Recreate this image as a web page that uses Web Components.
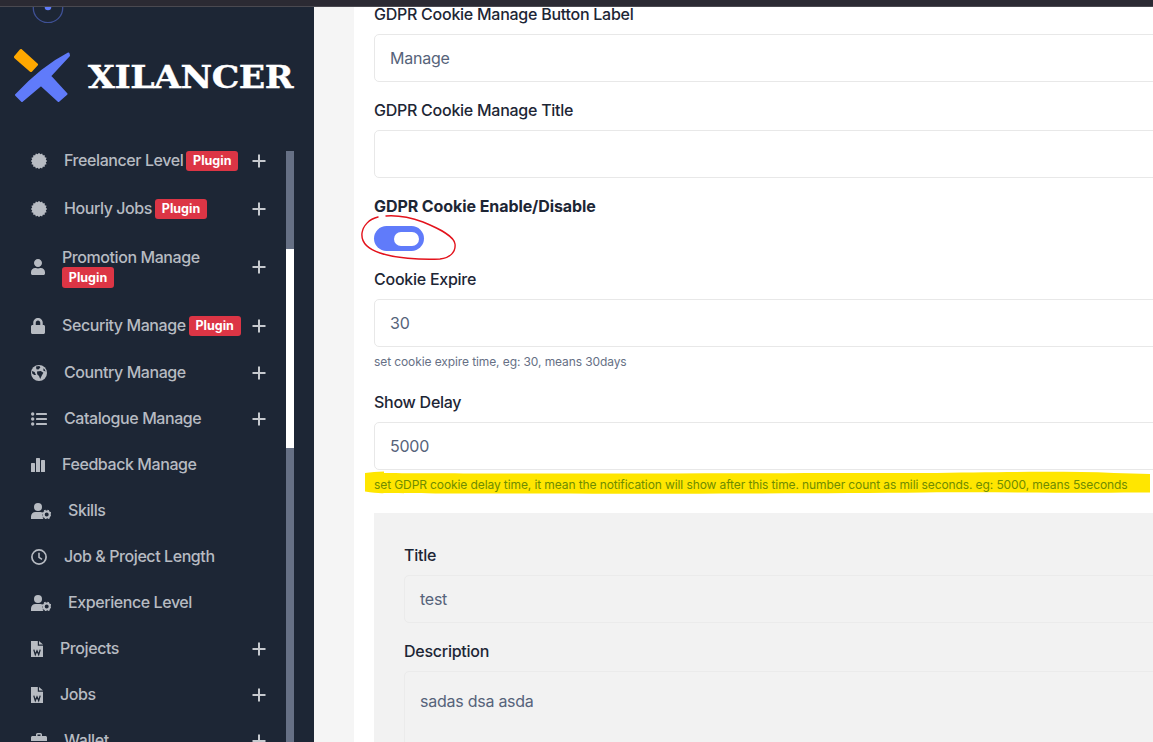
<!DOCTYPE html>
<html lang="en">
<head>
<meta charset="utf-8">
<title>Xilancer admin</title>
<style>
html,body{margin:0;padding:0;height:100%;overflow:hidden;background:#f5f5f5}
body{font-family:Inter,"Noto Sans",sans-serif}
</style>
</head>
<body>
<x-app>
  <x-sidebar slot="sidebar">
    <x-nav-item icon="gear" plus badge="Plugin">Freelancer Level</x-nav-item>
    <x-nav-item icon="gear" plus badge="Plugin">Hourly Jobs</x-nav-item>
    <x-nav-item icon="user" plus badge="Plugin" stacked>Promotion Manage</x-nav-item>
    <x-nav-item icon="lock" plus badge="Plugin">Security Manage</x-nav-item>
    <x-nav-item icon="globe" plus>Country Manage</x-nav-item>
    <x-nav-item icon="list" plus>Catalogue Manage</x-nav-item>
    <x-nav-item icon="chart">Feedback Manage</x-nav-item>
    <x-nav-item icon="usercog">Skills</x-nav-item>
    <x-nav-item icon="clock">Job &amp; Project Length</x-nav-item>
    <x-nav-item icon="usercog">Experience Level</x-nav-item>
    <x-nav-item icon="file" plus>Projects</x-nav-item>
    <x-nav-item icon="file" plus>Jobs</x-nav-item>
    <x-nav-item icon="case" plus>Wallet</x-nav-item>
  </x-sidebar>
  <x-card slot="main">
    <x-field label="GDPR Cookie Manage Button Label" value="Manage"></x-field>
    <x-field label="GDPR Cookie Manage Title"></x-field>
    <x-toggle-field label="GDPR Cookie Enable/Disable"></x-toggle-field>
    <x-field label="Cookie Expire" value="30" help="set cookie expire time, eg: 30, means 30days"></x-field>
    <x-field label="Show Delay" value="5000" help="set GDPR cookie delay time, it mean the notification will show after this time. number count as mili seconds. eg: 5000, means 5seconds" marked></x-field>
    <x-panel>
      <x-field label="Title" value="test"></x-field>
      <x-field label="Description" value="sadas dsa asda" tall></x-field>
    </x-panel>
  </x-card>
</x-app>

<script>
const teeth = (() => {
  let d = '';
  const n = 16;
  for (let i = 0; i < n * 2; i++) {
    const r = i % 2 ? 6.9 : 8.2, a = Math.PI * i / n;
    d += (i ? 'L' : 'M') + (8 + r * Math.cos(a)).toFixed(2) + ' ' + (8 + r * Math.sin(a)).toFixed(2);
  }
  return d + 'Z';
})();

const BG = '#1d2635';
const BLUE = '#607bfa';
const ICONS = {
  gear: [16, 16, `<path d="${teeth}"/>`],
  user: [448, 512, `<path d="M224 256c70.7 0 128-57.3 128-128S294.7 0 224 0 96 57.3 96 128s57.3 128 128 128zm89.6 32h-16.7c-22.2 10.2-46.9 16-72.9 16s-50.6-5.8-72.9-16h-16.7C60.2 288 0 348.2 0 422.4V464c0 26.5 21.5 48 48 48h352c26.5 0 48-21.5 48-48v-41.6c0-74.2-60.2-134.4-134.4-134.4z"/>`],
  lock: [448, 512, `<path d="M400 224h-24v-72C376 68.2 307.8 0 224 0S72 68.2 72 152v72H48c-26.5 0-48 21.5-48 48v192c0 26.5 21.5 48 48 48h352c26.5 0 48-21.5 48-48V272c0-26.5-21.5-48-48-48zm-104 0H152v-72c0-39.7 32.3-72 72-72s72 32.3 72 72v72z"/>`],
  globe: [16, 16, `<circle cx="8" cy="8" r="8"/><path fill="${BG}" d="M5 1.6 8.3 1 9.4 2.6 7.4 4.4 5.4 4.2ZM6 6.4 9.8 6 12.4 7.8 10.8 10.6 9.2 14 8 11 6.2 9.2ZM1 6l2.6 1L5 10H3.2L1.2 8.4ZM12.4 3.2l1.4 1.4.8 1.8-2.2-.6Z"/>`],
  list: [16, 16, `<circle cx="1.7" cy="3" r="1.7"/><circle cx="1.7" cy="8" r="1.7"/><circle cx="1.7" cy="13" r="1.7"/><rect x="5" y="2" width="11" height="2" rx=".4"/><rect x="5" y="7" width="11" height="2" rx=".4"/><rect x="5" y="12" width="11" height="2" rx=".4"/>`],
  chart: [14, 16, `<rect x="0" y="6" width="4" height="9" rx=".6"/><rect x="5" y="1" width="4" height="14" rx=".6"/><rect x="10" y="3" width="4" height="12" rx=".6"/>`],
  usercog: [20, 16, `<circle cx="7" cy="4" r="4"/><path d="M0 16v-2.4C0 11 2 9 4.500 9h5c.8 0 1.400.2 2 .5-.3 1 .1 1.900 0 3-.1 1.300.2 2.500 1 3.500H0Z"/><circle cx="15.700" cy="11.500" r="3" fill="none" stroke="currentColor" stroke-width="2"/><circle cx="15.700" cy="11.500" r="4.300" fill="none" stroke="currentColor" stroke-width="1.200" stroke-dasharray="1.700 1.700"/>`],
  clock: [16, 16, `<circle cx="8" cy="8" r="7.100" fill="none" stroke="currentColor" stroke-width="1.700"/><path d="M8 3.800V8.300l3 2.100" fill="none" stroke="currentColor" stroke-width="1.600"/>`],
  file: [12, 16, `<path d="M0 0h6.800v4.700H12V16H0Z"/><path d="M8 0l4 3.600H8Z"/><path d="M2.800 8.600l1.500 5 1.700-3.800 1.700 3.800 1.500-5" fill="none" stroke="${BG}" stroke-width="1.300"/>`],
  case: [16, 16, `<path d="M5 3V1.600C5 .8 5.700 0 6.500 0h3C10.300 0 11 .8 11 1.600V3h3.500C15.300 3 16 3.700 16 4.500V8H0V4.500C0 3.700.7 3 1.500 3ZM6.500 1.600V3h3V1.600ZM0 9.500h6V11h4V9.500h6v5c0 .8-.7 1.500-1.500 1.500h-13C.7 16 0 15.300 0 14.500Z"/>`]
};

function define(name, html, setup) {
  customElements.define(name, class extends HTMLElement {
    constructor() {
      super();
      this.attachShadow({ mode: 'open' });
    }
    connectedCallback() {
      this.shadowRoot.innerHTML = typeof html === 'function' ? html(this) : html;
      if (setup) setup(this);
    }
  });
}

define('x-app', `<style>
:host{display:flex;flex-direction:column;width:100vw;height:100vh;overflow:hidden}
.top{flex:none;height:6px;background:#2b2a33;border-bottom:1px solid #4a4950}
.body{flex:1;min-height:0;display:flex}
.side{flex:none;width:314px;display:flex;min-height:0}
.main{flex:1;min-width:0;overflow:hidden;padding-left:40px;background:#f5f5f5}
</style>
<div class="top"></div>
<div class="body">
  <div class="side"><slot name="sidebar"></slot></div>
  <div class="main"><slot name="main"></slot></div>
</div>`);

define('x-sidebar', `<style>
:host{display:block;position:relative;width:314px;background:${BG};overflow:hidden}
.dial{display:block;margin-left:32px}
.brand{display:flex;align-items:center;margin:25px 0 34px 14px;height:54px}
.brand svg{flex:none;display:block}
.word{margin-left:18px;color:#fff;font:700 32.500px/54px "DejaVu Serif",serif;letter-spacing:-.4px;white-space:nowrap;position:relative;top:2px;transform:scaleX(1.065);transform-origin:left center;-webkit-text-stroke:.4px #fff}
.track{position:absolute;left:286px;top:144px;bottom:0;width:8px;background:#667085}
.thumb{position:absolute;left:0;right:0;top:98px;height:199px;background:#fff}
</style>
<svg class="dial" width="32" height="16" viewBox="0 0 32 16" aria-hidden="true">
  <circle cx="16" cy="1" r="14.700" fill="none" stroke="#3f5196" stroke-width="1.300"/>
  <circle cx="16" cy="0" r="3.300" fill="${BLUE}"/>
</svg>
<div class="brand">
  <svg width="56" height="54" viewBox="14 48 56 54" aria-hidden="true">
    <path fill="#ffa800" stroke="#ffa800" stroke-width="3" stroke-linejoin="round" d="M15.500 57 21 50.500 36.500 64.500 31 70.500Z"/>
    <path fill="${BLUE}" stroke="${BLUE}" stroke-width="2" stroke-linejoin="round" d="M16 95C31 79 50 63 68.500 53.500L69 55.500 50 76 66.500 94 58.500 101 41 85 22 101Z"/>
  </svg>
  <span class="word">XILANCER</span>
</div>
<slot></slot>
<div class="track"><div class="thumb"></div></div>`);

define('x-badge', `<style>
:host{display:inline-flex;align-items:center;justify-content:center;box-sizing:border-box;width:52px;height:20px;background:#dc3545;border-radius:3px;color:#fff;font:700 12.500px/20px Inter,sans-serif;letter-spacing:0}
</style><slot></slot>`);

define('x-nav-item', el => {
  const name = el.getAttribute('icon');
  const [w, h, body] = ICONS[name];
  const width = { gear: 16, user: 14, lock: 14, globe: 16, list: 16, chart: 14, usercog: 20, clock: 16, file: 12, case: 16 }[name];
  const badge = el.getAttribute('badge');
  const stacked = el.hasAttribute('stacked');
  return `<style>
:host{display:flex;align-items:center;box-sizing:border-box;padding:11px 48px 11px 31px;color:#b7bbc2;font:500 16px/24px Inter,sans-serif;letter-spacing:-.42px}
svg.i{flex:none;display:block;margin-right:17px;margin-top:1px;fill:currentColor}
.txt{display:flex;align-items:center;white-space:nowrap;min-height:${badge ? 26 : 24}px;flex-wrap:wrap}
.txt.stack{flex-direction:column;align-items:flex-start}
.txt.stack x-badge{margin-top:-4px;margin-bottom:2px;height:21px}
.txt:not(.stack) x-badge{margin-left:3px;position:relative;top:1px}
.txt.stack span{line-height:28px}
.plus{flex:none;margin-left:auto;margin-top:1px;display:block;stroke:#c6c9ce;stroke-width:2}
</style>
<svg class="i" width="${width}" height="16" viewBox="0 0 ${w} ${h}" aria-hidden="true">${body}</svg>
<div class="txt ${stacked ? 'stack' : ''}"><span><slot></slot></span>${badge ? `<x-badge>${badge}</x-badge>` : ''}</div>
${el.hasAttribute('plus') ? `<svg class="plus" width="14" height="14" viewBox="0 0 14 14" aria-hidden="true"><path d="M7 0.500V13.500M0.500 7H13.500"/></svg>` : ''}`;
});

define('x-card', `<style>
:host{display:block;box-sizing:border-box;width:1100px;margin-top:-5px;padding:0 20px;background:#fff;min-height:800px}
</style><slot></slot>`);

define('x-panel', `<style>
:host{display:block;padding:30px;background:#f2f2f2;--box-border:#ebebeb}
</style><slot></slot>`);

define('x-label', `<style>
:host{display:block;color:#1d2635;font:500 16px/24px Inter,sans-serif;letter-spacing:-.26px;margin-bottom:8px}
:host([strong]){font-weight:700;letter-spacing:-.08px}
</style><slot></slot>`);

define('x-field', el => {
  const value = el.getAttribute('value') || '';
  const help = el.getAttribute('help');
  const marked = el.hasAttribute('marked');
  const tall = el.hasAttribute('tall');
  return `<style>
:host{display:block;margin-bottom:16px}
:host([help]){margin-bottom:19px}
.box{box-sizing:border-box;height:${tall ? 120 : 48}px;padding:${tall ? 6 : 0}px 15px 0;border:1px solid var(--box-border,#e8e8e8);border-radius:5px;color:#56637a;font:400 16px/46px Inter,sans-serif;letter-spacing:-.25px}
.help{position:relative;isolation:isolate;margin-top:6px;color:#667085;font:400 12px/18px Inter,sans-serif;letter-spacing:-.1px;white-space:nowrap}
.help.marked{color:#6f8c00}
.mark{position:absolute;left:-10px;top:-5px;z-index:-1;pointer-events:none}
</style>
<x-label>${el.getAttribute('label')}</x-label>
<div class="box">${value}</div>
${help ? `<div class="help ${marked ? 'marked' : ''}">${help}${marked ? `<svg class="mark" width="790" height="24" viewBox="0 0 790 24" aria-hidden="true"><path fill="#ffe600" d="M1 2 10 1 20 .5 20 2C120 3 400 2 560 2 640 1 700 0 750 2L786 3V21.500C700 22 640 21 560 21.500 400 23 100 23 20 22 18 22.500 10 22 1 20.500Z"/></svg>` : ''}</div>` : ''}`;
});

define('x-toggle', `<style>
:host{display:block;position:relative;box-sizing:border-box;width:50px;height:25px;border-radius:13px;background:${BLUE}}
.knob{position:absolute;left:20px;top:6px;width:25px;height:14px;border-radius:7px;background:#fff}
.ink{position:absolute;left:-14px;top:-12px;overflow:visible;pointer-events:none}
</style>
<div class="knob"></div>
<svg class="ink" width="96" height="48" viewBox="0 0 96 48" aria-hidden="true">
  <path fill="none" stroke="#e3131c" stroke-width="1.400" stroke-linecap="round" d="M18 3C9 5 3 12 2 19 1 28 8 35 20 39 34 44 60 46 80 45 90 44 96 38 95 30 94 22 80 15 63 8 52 4 40 1 26 2"/>
</svg>`);

define('x-toggle-field', el => `<style>
:host{display:block;margin-bottom:16px}
</style>
<x-label strong>${el.getAttribute('label')}</x-label>
<x-toggle></x-toggle>`);
</script>
</body>
</html>
